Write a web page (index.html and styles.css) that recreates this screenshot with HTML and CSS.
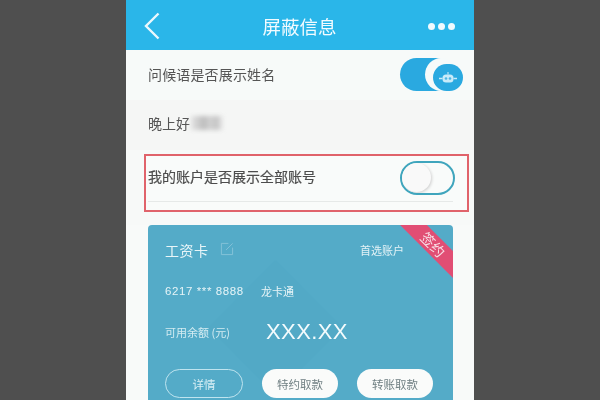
FILE: index.html
```html
<!DOCTYPE html>
<html lang="zh">
<head>
<meta charset="utf-8">
<title>屏蔽信息</title>
<link rel="stylesheet" href="styles.css">
</head>
<body>
<main class="phone">
  <header class="bar">
    <svg class="back" width="18" height="28" viewBox="0 0 18 28"><path d="M15.5 1.500 3 14l12.500 12.500" fill="none" stroke="#fff" stroke-width="2.400" opacity=".9"/></svg>
    <h1 class="title">屏蔽信息</h1>
    <div class="dots"><i></i><i></i><i></i></div>
  </header>
  <section class="row-name">
    <span class="label">问候语是否展示姓名</span>
    <div class="toggle-on">
      <span class="knob"></span>
      <span class="bot">
        <svg width="20" height="14" viewBox="0 0 20 14"><path d="M10 1v2.500" stroke="#b9e4f6" stroke-width="1.200"/><rect x="4.500" y="3.500" width="11" height="8" rx="3.500" fill="#c9ebf9"/><path d="M1 7.500h3.500M15.500 7.500H19" stroke="#c9ebf9" stroke-width="1.600"/><circle cx="8" cy="7.500" r="1.300" fill="#4db6e4"/><circle cx="12" cy="7.500" r="1.300" fill="#4db6e4"/></svg>
      </span>
    </div>
  </section>
  <section class="row-greet">
    <span class="label">晚上好</span><span class="blur"></span>
  </section>
  <section class="row-box">
    <div class="box-inner">
      <span class="label">我的账户是否展示全部账号</span>
      <div class="toggle-off"><span class="knob-off"></span></div>
    </div>
  </section>
  <section class="card">
    <div class="tile"></div>
    <div class="ribbon">签约</div>
    <div class="card-top">
      <span class="card-name">工资卡</span>
      <svg class="edit" width="14" height="14" viewBox="0 0 15 15"><path d="M9 1.500H1.500v12h12V6M6.500 8.500 13.500 1.500" fill="none" stroke="#86c3d8" stroke-width="1"/></svg>
      <span class="pref">首选账户</span>
    </div>
    <div class="card-num">
      <span class="num">6217 *** 8888</span>
      <span class="kind">龙卡通</span>
    </div>
    <div class="card-bal">
      <span class="avail">可用余额 (元)</span>
      <span class="amount">XXX.XX</span>
    </div>
    <div class="card-btns">
      <span class="btn ghost">详情</span>
      <span class="btn solid b2">特约取款</span>
      <span class="btn solid b3">转账取款</span>
    </div>
  </section>
</main>
</body>
</html>
```

FILE: styles.css
```css
* { box-sizing: border-box; }
html, body { margin: 0; height: 400px; overflow: hidden; }
body {
  background: #4f4f4f;
  display: flex;
  justify-content: center;
  font-family: "Noto Sans CJK SC", "Liberation Sans", sans-serif;
}
.phone {
  width: 348px;
  height: 400px;
  background: #f8faf9;
  overflow: hidden;
  display: flex;
  flex-direction: column;
  flex: none;
  filter: blur(.4px);
}
.bar {
  height: 50px;
  flex: none;
  background: #2ab6e9;
  display: flex;
  align-items: center;
  padding: 0 19px 0 17px;
  color: #f2fbff;
}
.back { flex: none; margin-top: 2px; }
.title {
  flex: 1;
  margin: 0;
  padding-left: 10px;
  text-align: center;
  font-size: 18.500px;
  font-weight: 400;
  line-height: 52px;
  height: 50px;
}
.dots { display: flex; gap: 3px; flex: none; margin-top: 2px; }
.dots i { width: 7px; height: 7px; border-radius: 50%; background: #f0fafe; }
.label { font-size: 14px; color: #555; }
.row-name {
  height: 50px;
  flex: none;
  background: #f7faf9;
  display: flex;
  align-items: center;
  justify-content: space-between;
  padding: 0 22px 2px 22px;
}
.row-name .label { font-size: 14px; letter-spacing: .15px; }
.toggle-on {
  position: relative;
  width: 52px;
  height: 33px;
  border-radius: 17px;
  background: #2aa9e0;
  margin-top: 1px;
}
.knob {
  position: absolute;
  right: -6px;
  top: 0;
  width: 33px;
  height: 33px;
  border-radius: 50%;
  background: #f6fafa;
}
.bot {
  position: absolute;
  right: -11px;
  top: 6px;
  width: 30px;
  height: 27px;
  border-radius: 14px;
  background: #2aa9e0;
  display: flex;
  align-items: center;
  justify-content: center;
}
.row-greet {
  height: 50px;
  flex: none;
  background: #f5f6f5;
  display: flex;
  align-items: center;
  padding: 0 0 4px 22px;
}
.blur {
  width: 32px;
  height: 14px;
  margin-left: 1px;
  background: linear-gradient(90deg, #e3e3e3, #bdbdbd 40%, #d2d2d2 60%, #c4c4c4 80%, #ececec);
  filter: blur(2px);
}
.row-box {
  flex: none;
  height: 75px;
  background: #f7f9f8;
  padding: 4px 5px 13px 18px;
}
.box-inner {
  height: 58px;
  border: 2px solid #e0636b;
  position: relative;
  display: flex;
  align-items: flex-start;
  justify-content: space-between;
  padding: 5px 12px 0 2px;
  background: #f9fbfa;
}
.box-inner::after {
  content: "";
  position: absolute;
  left: 2px;
  right: 14px;
  bottom: 8px;
  height: 1px;
  background: #e6e9e8;
}
.box-inner .label { margin-top: 5px; font-size: 14px; color: #4d4d4d; -webkit-text-stroke: .2px #4d4d4d; }
.toggle-off {
  width: 55px;
  height: 34px;
  border: 2.500px solid #3fa5bd;
  border-radius: 17px;
  background: #f9fbfa;
  overflow: hidden;
}
.knob-off {
  display: block;
  width: 29px;
  height: 29px;
  border-radius: 50%;
  background: #f9f9f9;
  box-shadow: 1px 1px 3px #d0d0d0;
}
.card {
  position: relative;
  flex: none;
  width: 305px;
  height: 200px;
  margin-left: 22px;
  background: #54abc8;
  border-radius: 4px 4px 0 0;
  overflow: hidden;
  padding: 14px 0 0 17px;
  color: #eef8fb;
}
.tile {
  position: absolute;
  left: 80px;
  top: 55px;
  width: 95px;
  height: 95px;
  background: #52a9c6;
  transform: rotate(45deg);
}
.ribbon {
  position: absolute;
  right: -45px;
  top: 10px;
  width: 130px;
  height: 19px;
  background: #e14e74;
  color: #f8dfe6;
  transform: rotate(45deg);
  text-align: center;
  font-size: 14px;
  line-height: 19px;
}
.card-top, .card-num, .card-bal, .card-btns { position: relative; display: flex; align-items: center; }
.card-top { height: 22px; }
.card-name { font-size: 14px; letter-spacing: .5px; color: #e8f5f8; }
.edit { margin: -3px 0 0 11px; }
.pref { position: absolute; left: 195px; font-size: 11px; color: #e2f2f6; }
.card-num { height: 16px; margin-top: 22px; }
.num { width: 96px; font-size: 11.500px; letter-spacing: .6px; font-family: "Liberation Sans", sans-serif; color: #e6f4f7; }
.kind { font-size: 11px; color: #e6f4f7; }
.card-bal { height: 30px; margin-top: 18px; }
.avail { width: 101px; font-size: 11px; color: #d4ecf2; }
.amount { font-size: 22px; letter-spacing: .4px; font-family: "Liberation Sans", sans-serif; color: #f3fbfd; }
.card-btns { margin-top: 22px; }
.btn {
  height: 29px;
  border-radius: 15px;
  font-size: 11.500px;
  display: flex;
  align-items: center;
  justify-content: center;
}
.ghost { width: 78px; border: 1.500px solid #bfe4ef; color: #d8eff5; }
.solid { width: 76px; background: #fafbfa; color: #6f7f82; }
.b2 { margin-left: 19px; }
.b3 { margin-left: 19px; }
```
